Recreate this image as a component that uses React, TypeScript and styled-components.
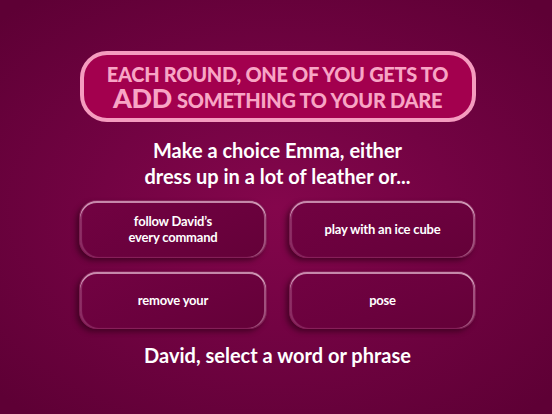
import styled, { createGlobalStyle } from 'styled-components';

const Global = createGlobalStyle`
  html, body { margin: 0; padding: 0; }
  body { font-family: Lato, "Open Sans", sans-serif; }
`;

const Screen = styled.div`
  width: 552px;
  height: 414px;
  box-sizing: border-box;
  padding: 51px 0 0 3px;
  display: flex;
  flex-direction: column;
  align-items: center;
  background: radial-gradient(ellipse 70% 65% at 50% 50%, #84064c 0%, #730343 45%, #5e0035 100%);
  overflow: hidden;
`;

const Banner = styled.div`
  width: 396px;
  height: 71px;
  box-sizing: border-box;
  border: 4px solid #f59cbf;
  border-radius: 27px;
  background: #a3004e;
  display: flex;
  flex-direction: column;
  align-items: center;
  justify-content: center;
  gap: 4px;
  color: #f8a5c5;
  font-weight: 900;
  text-transform: uppercase;
`;

const BannerLine = styled.div`
  font-size: 20px;
  line-height: 20px;
  letter-spacing: -0.3px;
  white-space: nowrap;
  display: flex;
  align-items: baseline;
  gap: 5px;
`;

const Big = styled.span`
  font-size: 27px;
  line-height: 20px;
`;

const Prompt = styled.div`
  margin-top: 15px;
  color: #ffffff;
  font-size: 20px;
  font-weight: 700;
  line-height: 26px;
  text-align: center;
`;

const Grid = styled.div`
  margin-top: 11px;
  display: grid;
  grid-template-columns: 188px 187px;
  column-gap: 22px;
  row-gap: 13px;
`;

const Choice = styled.button`
  height: 58px;
  box-sizing: border-box;
  border-radius: 18px;
  border: 1px solid rgba(255, 190, 220, 0.16);
  background: linear-gradient(160deg, #720242 0%, #6a013d 60%, #640138 100%);
  color: #ffffff;
  font-family: Lato, "Open Sans", sans-serif;
  font-weight: 700;
  font-size: 13px;
  letter-spacing: -0.2px;
  line-height: 16px;
  padding: 0 12px;
  box-shadow:
    inset 0 2px 0 rgba(255, 225, 240, 0.6),
    inset -2px 0 0 rgba(255, 210, 235, 0.38),
    inset 2px 0 1px rgba(255, 210, 235, 0.22),
    -3px 3px 5px rgba(45, 0, 22, 0.6);
  cursor: pointer;
`;

const Footer = styled.div`
  margin-top: 14px;
  color: #ffffff;
  font-size: 20px;
  font-weight: 700;
`;

export default function App() {
  return (
    <>
      <Global />
      <Screen>
        <Banner>
          <BannerLine>Each round, one of you gets to</BannerLine>
          <BannerLine>
            <Big>Add</Big>
            <span>something to your dare</span>
          </BannerLine>
        </Banner>
        <Prompt>
          Make a choice Emma, either
          <br />
          dress up in a lot of leather or...
        </Prompt>
        <Grid>
          <Choice>
            follow David’s
            <br />
            every command
          </Choice>
          <Choice>play with an ice cube</Choice>
          <Choice>remove your</Choice>
          <Choice>pose</Choice>
        </Grid>
        <Footer>David, select a word or phrase</Footer>
      </Screen>
    </>
  );
}
